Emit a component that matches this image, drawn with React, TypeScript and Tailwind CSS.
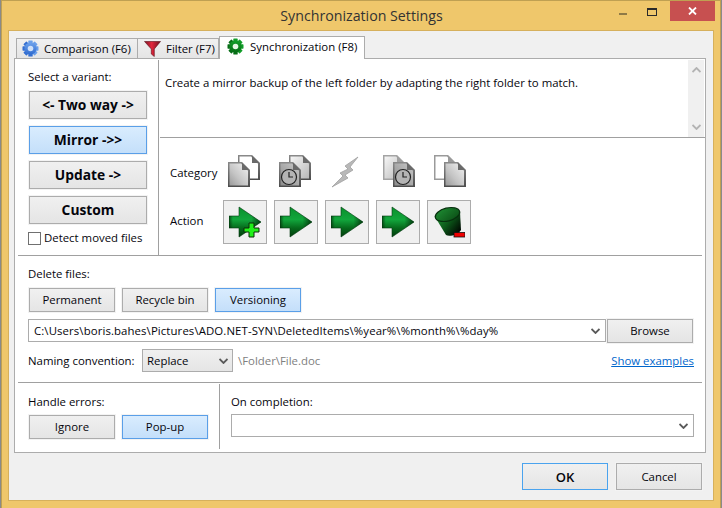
import React from "react";

const Defs = () => (
  <svg className="block w-0 h-0">
    <defs>
      <linearGradient id="dg" x1="1" y1="0" x2="0" y2="1">
        <stop offset="0" stopColor="#f2f2f2" />
        <stop offset="0.6" stopColor="#c4c4c4" />
        <stop offset="1" stopColor="#9a9a9a" />
      </linearGradient>
      <linearGradient id="dk" x1="1" y1="0" x2="0" y2="1">
        <stop offset="0" stopColor="#c8c8c8" />
        <stop offset="1" stopColor="#8c8c8c" />
      </linearGradient>
      <linearGradient id="lt" x1="0" y1="0" x2="1" y2="1">
        <stop offset="0" stopColor="#f6f6f6" />
        <stop offset="1" stopColor="#b8b8b8" />
      </linearGradient>
      <linearGradient id="edge" x1="0" y1="0" x2="0" y2="1">
        <stop offset="0" stopColor="#8a8a8a" />
        <stop offset="1" stopColor="#4c4c4c" />
      </linearGradient>
      <linearGradient id="ar" x1="0" y1="0" x2="0" y2="1">
        <stop offset="0" stopColor="#0a8f2c" />
        <stop offset="0.42" stopColor="#12a63c" />
        <stop offset="0.7" stopColor="#066a1c" />
        <stop offset="1" stopColor="#023c0c" />
      </linearGradient>
      <linearGradient id="tip" x1="0" y1="0" x2="1" y2="0">
        <stop offset="0" stopColor="#012a08" stopOpacity="0.7" />
        <stop offset="0.12" stopColor="#012a08" stopOpacity="0" />
        <stop offset="0.7" stopColor="#012a08" stopOpacity="0" />
        <stop offset="1" stopColor="#012a08" stopOpacity="0.85" />
      </linearGradient>
      <linearGradient id="bn" x1="0" y1="0" x2="1" y2="0.700">
        <stop offset="0" stopColor="#27a03c" />
        <stop offset="0.55" stopColor="#0c5a1a" />
        <stop offset="1" stopColor="#010d03" />
      </linearGradient>
      <linearGradient id="bi" x1="0" y1="0" x2="1" y2="1">
        <stop offset="0" stopColor="#1f8f34" />
        <stop offset="1" stopColor="#0a4a14" />
      </linearGradient>
      <linearGradient id="fn" x1="0" y1="0" x2="1" y2="0">
        <stop offset="0" stopColor="#7c1626" />
        <stop offset="0.45" stopColor="#e2263c" />
        <stop offset="1" stopColor="#6c1020" />
      </linearGradient>
      <linearGradient id="gb" x1="0" y1="0" x2="0" y2="1">
        <stop offset="0" stopColor="#6fa3ec" />
        <stop offset="1" stopColor="#2f6bd0" />
      </linearGradient>
      <linearGradient id="gg" x1="0" y1="0" x2="0" y2="1">
        <stop offset="0" stopColor="#12a02a" />
        <stop offset="1" stopColor="#056a14" />
      </linearGradient>
    </defs>
  </svg>
);

const Doc = ({ x, y, fill, edge = "url(#edge)", fold = "#6a6a6a", w = 22, h = 25 }: { x: number; y: number; fill: string; edge?: string; fold?: string; w?: number; h?: number }) => (
  <g>
    <path d={`M${x} ${y}h${w - 8}l8 8V${y + h}H${x}Z`} fill={edge} />
    <path d={`M${x + 1.500} ${y + 1.500}h${w - 10.500}l7 7V${y + h - 1.500}H${x + 1.500}Z`} fill={fill} />
    <path d={`M${x + w - 8} ${y + 0.500}l7.500 7.500h-7.500Z`} fill={fold} />
  </g>
);

const Clock = ({ cx, cy }: { cx: number; cy: number }) => (
  <g>
    <circle cx={cx} cy={cy} r="7.500" fill="#b4b4b4" stroke="#222" strokeWidth="1.200" />
    <path d={`M${cx} ${cy - 5}V${cy}H${cx + 4}`} fill="none" stroke="#222" strokeWidth="1.200" />
  </g>
);

const CatIcon = ({ kind }: { kind: number }) => (
  <svg width="34" height="33" viewBox="0 0 34 33" className="block">
    {kind === 0 && (
      <>
        <Doc x={10} y={0} fill="#fff" />
        <Doc x={0} y={7} fill="url(#dg)" />
      </>
    )}
    {kind === 1 && (
      <>
        <Doc x={10} y={0} fill="url(#lt)" />
        <Doc x={0} y={7} fill="url(#dk)" />
        <Clock cx={10} cy={22} />
      </>
    )}
    {kind === 2 && (
      <path d="M28 2 15 11l3 3-8 4 3 3L2 32l16-9-3-3 8-5-3-3Z" fill="#b8b8b8" stroke="#a0a0a0" strokeWidth="0.800" />
    )}
    {kind === 3 && (
      <>
        <Doc x={2} y={0} fill="url(#lt)" edge="#a4a4a4" fold="#a0a0a0" />
        <Doc x={12} y={7} fill="url(#dk)" />
        <Clock cx={22} cy={22} />
      </>
    )}
    {kind === 4 && (
      <>
        <Doc x={2} y={0} fill="#fff" edge="#9a9a9a" fold="#9a9a9a" />
        <Doc x={12} y={7} fill="url(#dg)" />
      </>
    )}
  </svg>
);

const ActIcon = ({ kind }: { kind: "create" | "update" | "delete" }) => (
  <svg width="32" height="32" viewBox="0 0 32 32" className="block">
    {kind === "delete" ? (
      <>
        <path d="M1.500 10 13 29c3 2 12 0 15-5L27 6Z" fill="url(#bn)" />
        <ellipse cx="14.500" cy="8.500" rx="12.500" ry="6.500" transform="rotate(-14 14.500 8.500)" fill="url(#bi)" stroke="#07300e" strokeWidth="1.200" />
        <rect x="21" y="26.500" width="11" height="4.500" fill="#ee0000" stroke="#111" strokeWidth="0.800" />
      </>
    ) : (
      <>
        <path d="M0 10h10V1l22 15-22 15v-9H0Z" fill="url(#ar)" stroke="#043a10" strokeWidth="0.600" />
        <path d="M0 10h10V1l22 15-22 15v-9H0Z" fill="url(#tip)" />
        {kind === "create" && (
          <path d="M20 17h5v5h5v4h-5v5h-5v-5h-5v-4h5Z" fill="#21f019" stroke="#0c2c08" strokeWidth="1" />
        )}
      </>
    )}
  </svg>
);

const Gear = ({ color, light }: { color: string; light: string }) => (
  <svg width="17" height="17" viewBox="0 0 17 17" className="block shrink-0">
    {[0, 45, 90, 135].map((a) => (
      <rect key={a} x="6.300" y="0.500" width="4.400" height="16" rx="0.600" fill={color} transform={`rotate(${a} 8.500 8.500)`} />
    ))}
    <circle cx="8.500" cy="8.500" r="6" fill={color} />
    <circle cx="8.500" cy="8.500" r="2.800" fill={light} />
  </svg>
);

const Funnel = () => (
  <svg width="17" height="17" viewBox="0 0 17 17" className="block shrink-0">
    <path d="M0.500 1.500h16L10.300 9v7.500L7.300 14V9Z" fill="url(#fn)" stroke="#5c0d18" strokeWidth="0.600" />
  </svg>
);

const Chev = ({ className = "" }: { className?: string }) => (
  <svg width="9" height="6" viewBox="0 0 9 6" className={`block shrink-0 ${className}`}>
    <path d="M0.500 1 4.500 5 8.500 1" fill="none" stroke="#5a5a5a" strokeWidth="1.800" />
  </svg>
);

const Btn = ({ active, className = "", children }: { active?: boolean; className?: string; children: React.ReactNode }) => (
  <div
    className={`flex items-center justify-center border shadow-[0_0_0_1px_#f3f3f3] bg-gradient-to-b ${
      active ? "border-[#5a9fe8] from-[#d9ecfe] to-[#c4dffa]" : "border-[#acacac] from-[#f0f0f0] to-[#e5e5e5]"
    } ${className}`}
  >
    {children}
  </div>
);

const HLine = () => <div className="h-px mx-[3px] bg-[#a0a0a0]" />;

export default function App() {
  return (
    <div
      className="w-[722px] h-[508px] bg-[#8a8a8a] overflow-hidden text-[11.400px] leading-[16px] text-[#05050c] pl-px"
      style={{ fontFamily: '"Open Sans", "Noto Sans", sans-serif' }}
    >
      <Defs />
      <div className="w-[720px] h-[508px] border border-b-0 border-[#bfa052] bg-[#efc76b] flex flex-col">
        <div className="h-[29px] flex shrink-0">
          <div className="w-[262px]" />
          <div className="w-[195px] pt-[6px] text-center text-[14.200px] leading-[18px] text-[#333]">Synchronization Settings</div>
          <div className="flex-1" />
          <div className="w-[22px] flex justify-center pt-[12px]">
            <div className="w-[8px] h-[2px] bg-[#8f7a46]" />
          </div>
          <div className="w-[36px] flex justify-center pt-[7px]">
            <div className="w-[10px] h-[8px] border border-t-[2px] border-[#2a2a2a]" />
          </div>
          <div className="w-[45px] h-[20px] bg-[#c75050] flex items-center justify-center mr-[5px]">
            <svg width="9" height="8" viewBox="0 0 9 8">
              <path d="M1 0.500 8 7.500M8 0.500 1 7.500" stroke="#fff" strokeWidth="1.800" />
            </svg>
          </div>
        </div>
        <div className="ml-[6px] mr-[6px] h-[471px] border border-[#d6b05c] bg-[#f0f0f0] shrink-0 flex flex-col pl-[5px] pt-[5px] pr-[7px]">
          <div className="flex items-end h-[22px] pl-[2px] shrink-0">
            <div className="w-[122px] h-[20px] border border-b-0 border-[#acacac] bg-gradient-to-b from-[#f0f0f0] to-[#e5e5e5] flex items-center pl-[5px] gap-[5px] whitespace-nowrap">
              <Gear color="url(#gb)" light="#cfe0f8" />
              <span>Comparison (F6)</span>
            </div>
            <div className="w-[81px] h-[20px] border border-b-0 border-l-0 border-[#acacac] bg-gradient-to-b from-[#f0f0f0] to-[#e5e5e5] flex items-center pl-[6px] gap-[5px] whitespace-nowrap">
              <Funnel />
              <span>Filter (F7)</span>
            </div>
            <div className="w-[146px] h-[23px] -mb-px z-10 border border-b-0 border-[#acacac] bg-white flex items-center pl-[7px] pb-[3px] gap-[6px] whitespace-nowrap">
              <Gear color="url(#gg)" light="#e4f7e4" />
              <span>Synchronization (F8)</span>
            </div>
          </div>
          <div className="h-[395px] border border-[#acacac] bg-white flex flex-col shrink-0">
            <div className="h-[196px] flex shrink-0">
              <div className="w-[144px] mt-px border-r border-[#a0a0a0] pl-[13px] pr-[11px] flex flex-col shrink-0">
                <div className="h-[16px] mt-[9px]">Select a variant:</div>
                <div className="flex flex-col gap-[7px] mt-[6px] ml-px text-[13.800px] font-bold">
                  <Btn className="h-[28px]">&lt;- Two way -&gt;</Btn>
                  <Btn active className="h-[28px]">Mirror -&gt;&gt;</Btn>
                  <Btn className="h-[28px]">Update -&gt;</Btn>
                  <Btn className="h-[28px]">Custom</Btn>
                </div>
                <div className="flex items-center gap-[3px] mt-[6px]">
                  <div className="w-[13px] h-[13px] border border-[#707070] bg-white shrink-0" />
                  <span className="whitespace-nowrap">Detect moved files</span>
                </div>
              </div>
              <div className="flex-1 flex flex-col mt-px">
                <div className="h-[78px] flex border-b border-[#a0a0a0] ml-px shrink-0">
                  <div className="flex-1 pl-[5px] pt-[15px]">Create a mirror backup of the left folder by adapting the right folder to match.</div>
                  <div className="w-[16px] mr-px bg-[#f0f0f0] flex flex-col justify-between items-center py-[7px]">
                    <Chev className="rotate-180 opacity-40" />
                    <Chev className="opacity-40" />
                  </div>
                </div>
                <div className="grid grid-cols-[46px_44px_44px_44px_44px_44px] gap-x-[7px] pl-[11px] mt-[17px] items-center">
                  <div className="translate-y-px">Category</div>
                  {[0, 1, 2, 3, 4].map((k) => (
                    <div key={k} className="flex justify-center h-[33px]">
                      <CatIcon kind={k} />
                    </div>
                  ))}
                  <div className="mt-[10px]">Action</div>
                  {(["create", "update", "update", "update", "delete"] as const).map((k, i) => (
                    <div key={i} className="mt-[12px] h-[44px] border border-[#acacac] bg-[#f0f0f0] flex items-center justify-center">
                      <ActIcon kind={k} />
                    </div>
                  ))}
                </div>
              </div>
            </div>
            <HLine />
            <div className="h-[126px] pl-[13px] pr-[11px] shrink-0 flex flex-col">
              <div className="mt-[10px] h-[16px]">Delete files:</div>
              <div className="flex gap-[7px] mt-[6px] ml-px">
                <Btn className="w-[86px] h-[24px]">Permanent</Btn>
                <Btn className="w-[86px] h-[24px]">Recycle bin</Btn>
                <Btn active className="w-[86px] h-[24px]">Versioning</Btn>
              </div>
              <div className="flex mt-[7px] items-start">
                <div className="w-[578px] h-[23px] border border-[#acacac] flex items-center pl-[5px] pr-[5px] justify-between">
                  <span className="tracking-[0.1px]">C:\Users\boris.bahes\Pictures\ADO.NET-SYN\DeletedItems\%year%\%month%\%day%</span>
                  <Chev />
                </div>
                <Btn className="w-[86px] h-[24px] ml-px">Browse</Btn>
              </div>
              <div className="flex items-center mt-[6px] h-[23px]">
                <span className="w-[114px] shrink-0">Naming convention:</span>
                <div className="w-[91px] h-[23px] border border-[#acacac] bg-gradient-to-b from-[#f0f0f0] to-[#e5e5e5] flex items-center justify-between pl-[4px] pr-[4px]">
                  <span>Replace</span>
                  <Chev />
                </div>
                <span className="ml-[5px] text-[#808080]">\Folder\File.doc</span>
                <span className="ml-auto text-[#0066cc] underline">Show examples</span>
              </div>
            </div>
            <HLine />
            <div className="flex-1 flex">
              <div className="w-[205px] border-r border-[#a0a0a0] mt-px mb-[3px] pl-[13px] shrink-0">
                <div className="mt-[10px] h-[16px]">Handle errors:</div>
                <div className="flex gap-[7px] mt-[5px] ml-px">
                  <Btn className="w-[86px] h-[24px]">Ignore</Btn>
                  <Btn active className="w-[86px] h-[24px]">Pop-up</Btn>
                </div>
              </div>
              <div className="flex-1 pl-[11px] pr-[11px] pt-px">
                <div className="mt-[10px] h-[16px]">On completion:</div>
                <div className="mt-[4px] h-[23px] border border-[#acacac] flex items-center justify-end pr-[5px]">
                  <Chev />
                </div>
              </div>
            </div>
          </div>
          <div className="flex justify-end gap-[8px] mt-[10px] pr-[4px]">
            <div className="w-[86px] h-[27px] flex items-center justify-center border border-[#4aa3ee] bg-gradient-to-b from-[#f0f0f0] to-[#e5e5e5] text-[13px] font-semibold">OK</div>
            <Btn className="w-[86px] h-[27px]">Cancel</Btn>
          </div>
        </div>
        <div className="flex-1" />
      </div>
    </div>
  );
}
